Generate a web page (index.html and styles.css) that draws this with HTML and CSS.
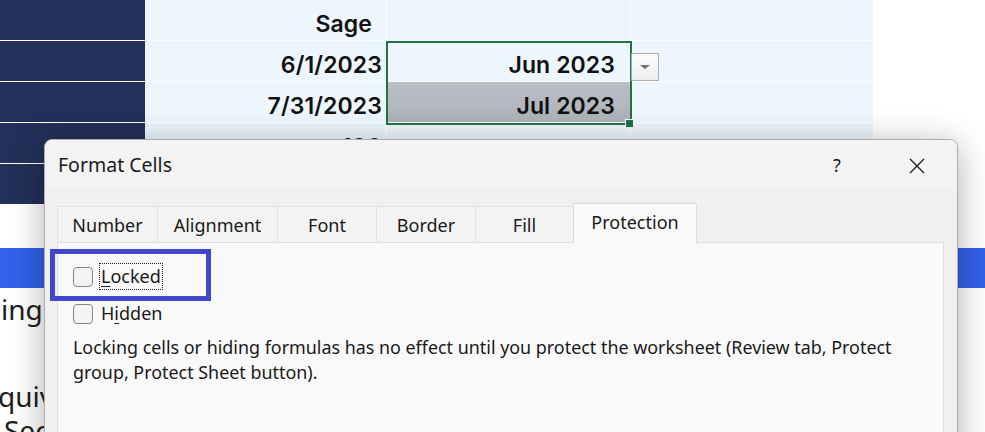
FILE: index.html
```html
<!DOCTYPE html>
<html lang="en">
<head>
  <meta charset="UTF-8">
  <title>Format Cells - Protection</title>
  <link rel="stylesheet" href="styles.css">
</head>
<body>
  <div class="sheet">
    <div class="cell side"></div>
    <div class="cell hdr">Sage</div>
    <div class="cell"></div>
    <div class="cell last"></div>

    <div class="cell side"></div>
    <div class="cell">6/1/2023</div>
    <div class="cell mon">Jun 2023</div>
    <div class="cell last"></div>

    <div class="cell side"></div>
    <div class="cell">7/31/2023</div>
    <div class="cell mon sel">Jul 2023</div>
    <div class="cell last"></div>

    <div class="cell side"></div>
    <div class="cell">100</div>
    <div class="cell"></div>
    <div class="cell last"></div>

    <div class="cell side"></div>
    <div class="cell"></div>
    <div class="cell"></div>
    <div class="cell last"></div>

    <div class="selection"></div>
    <div class="fill-handle"></div>
    <div class="dropdown"><span class="caret"></span></div>
  </div>

  <div class="banner"></div>

  <div class="article">
    <p><span class="l1">ing the right cells</span></p>
    <p><span class="l2">quivalent to locking</span><br><span class="l3">Sec</span></p>
  </div>

  <div class="dialog">
    <div class="titlebar">
      <span class="title">Format Cells</span>
      <span class="help">?</span>
      <span class="close">
        <svg width="16" height="16" viewBox="0 0 16 16"><path d="M1 1 L15 15 M15 1 L1 15" stroke="#1b1b1b" stroke-width="1.3" fill="none"/></svg>
      </span>
    </div>
    <div class="dlg-body">
      <div class="tabs">
        <div class="tab t-number">Number</div>
        <div class="tab t-align">Alignment</div>
        <div class="tab t-font">Font</div>
        <div class="tab t-border">Border</div>
        <div class="tab t-fill">Fill</div>
        <div class="tab t-prot active">Protection</div>
      </div>
      <div class="panel">
        <div class="check">
          <span class="box"></span>
          <span class="label focus"><u>L</u>ocked</span>
        </div>
        <div class="check second">
          <span class="box"></span>
          <span class="label">H<u>i</u>dden</span>
        </div>
        <p class="note">Locking cells or hiding formulas has no effect until you protect the worksheet (Review tab, Protect<br>group, Protect Sheet button).</p>
      </div>
    </div>
    <div class="highlight"></div>
  </div>
</body>
</html>
```

FILE: styles.css
```css
body {
  margin: 0;
  width: 985px;
  height: 432px;
  overflow: hidden;
  background: #fff;
  position: relative;
  font-family: "Noto Sans", "Open Sans", sans-serif;
  color: #1a1a1a;
}

/* spreadsheet behind the dialog */
.sheet {
  position: relative;
  display: grid;
  grid-template-columns: 145px 242px 244px 242px;
  grid-auto-rows: 41px;
  width: 873px;
}
.cell {
  box-sizing: border-box;
  background: #edf5fd;
  border-bottom: 1px solid #fbfdff;
  border-right: 1px solid #fbfdff;
  display: flex;
  align-items: center;
  justify-content: flex-end;
  padding: 7px 4px 0 0;
  font-family: Inter, "Liberation Sans", sans-serif;
  font-weight: 600;
  font-size: 23px;
  letter-spacing: 0.1px;
  color: #111;
}
.cell.side {
  background: #233059;
  border-right: none;
  border-bottom-color: #fff;
}
.cell.last {
  border-right: none;
}
.cell.hdr {
  padding-right: 14px;
}
.cell.mon {
  padding-right: 15px;
}
.cell.sel {
  background: linear-gradient(#bcbfc6, #aeb1b8);
}
.selection {
  position: absolute;
  left: 386px;
  top: 41px;
  width: 246px;
  height: 84px;
  box-sizing: border-box;
  border: 2px solid #217346;
}
.fill-handle {
  position: absolute;
  left: 625px;
  top: 119px;
  width: 7px;
  height: 7px;
  background: #217346;
  border: 1px solid #fff;
  border-width: 1px 0 0 1px;
}
.dropdown {
  position: absolute;
  left: 631px;
  top: 53px;
  width: 28px;
  height: 28px;
  box-sizing: border-box;
  border: 1px solid #acacac;
  background: linear-gradient(#fbfbfb, #ededed);
  display: flex;
  align-items: center;
  justify-content: center;
}
.caret {
  width: 0;
  height: 0;
  border-left: 5px solid transparent;
  border-right: 5px solid transparent;
  border-top: 4px solid #6e6e6e;
}

/* page behind */
.banner {
  margin-top: 43px;
  height: 40px;
  background: #3162e8;
}
.article {
  font-size: 28px;
  line-height: 34px;
  color: #202020;
  white-space: nowrap;
}
.article p {
  margin: 4px 0 53px;
}
.article .l1 {
  margin-left: 1px;
}
.article .l2 {
  margin-left: -2px;
}
.article .l3 {
  margin-left: 4px;
}

/* dialog */
.dialog {
  position: absolute;
  left: 44px;
  top: 139px;
  width: 914px;
  height: 320px;
  box-sizing: border-box;
  border: 1px solid #adadad;
  border-radius: 8px 8px 0 0;
  background: #f0f0f0;
  box-shadow: 0 6px 34px rgba(0, 0, 0, 0.32);
  overflow: hidden;
}
.titlebar {
  height: 50px;
  background: #f3f3f3;
  display: flex;
  align-items: center;
  padding-left: 13px;
}
.title {
  flex: 1;
  font-size: 19.5px;
  padding-bottom: 1px;
}
.help {
  width: 46px;
  text-align: center;
  font-size: 18px;
  margin-right: 34px;
}
.close {
  width: 46px;
  margin-right: 17px;
  display: flex;
  justify-content: center;
  padding-top: 2px;
}
.dlg-body {
  padding: 13px 13px 0 12px;
}
.tabs {
  display: flex;
  align-items: flex-end;
  height: 39px;
}
.tab {
  box-sizing: border-box;
  height: 36px;
  border: 1px solid #e1e1e1;
  border-bottom: none;
  margin-right: -1px;
  background: #f3f3f3;
  display: flex;
  align-items: center;
  justify-content: center;
  font-size: 18px;
}
.t-number { width: 101px; }
.t-align { width: 121px; }
.t-font { width: 100px; }
.t-border { width: 100px; }
.t-fill { width: 99px; }
.t-prot { width: 124px; }
.tab.active {
  height: 40px;
  margin-bottom: -1px;
  background: #f9f9f9;
  border-color: #dcdcdc;
  position: relative;
  z-index: 1;
  padding-bottom: 3px;
}
.panel {
  height: 200px;
  border: 1px solid #dedede;
  background: #f9f9f9;
  padding: 20px 15px 0;
}
.check {
  display: flex;
  align-items: center;
  height: 27px;
}
.check.second {
  margin-top: 10px;
}
.box {
  width: 20px;
  height: 20px;
  box-sizing: border-box;
  border: 1px solid #858585;
  border-radius: 4px;
  background: #f4f4f4;
}
.label {
  margin-left: 6px;
  padding: 0 1px;
  border: 1px solid transparent;
  font-size: 18px;
  line-height: 25px;
}
.label.focus {
  border: 1px dotted #222;
}
.label u {
  text-underline-offset: 3px;
}
.note {
  margin: 8px 0 0;
  font-size: 17.9px;
  line-height: 25px;
}
.highlight {
  position: absolute;
  left: 5px;
  top: 109px;
  width: 161px;
  height: 52px;
  box-sizing: border-box;
  border: 5px solid #4347cb;
}
```
